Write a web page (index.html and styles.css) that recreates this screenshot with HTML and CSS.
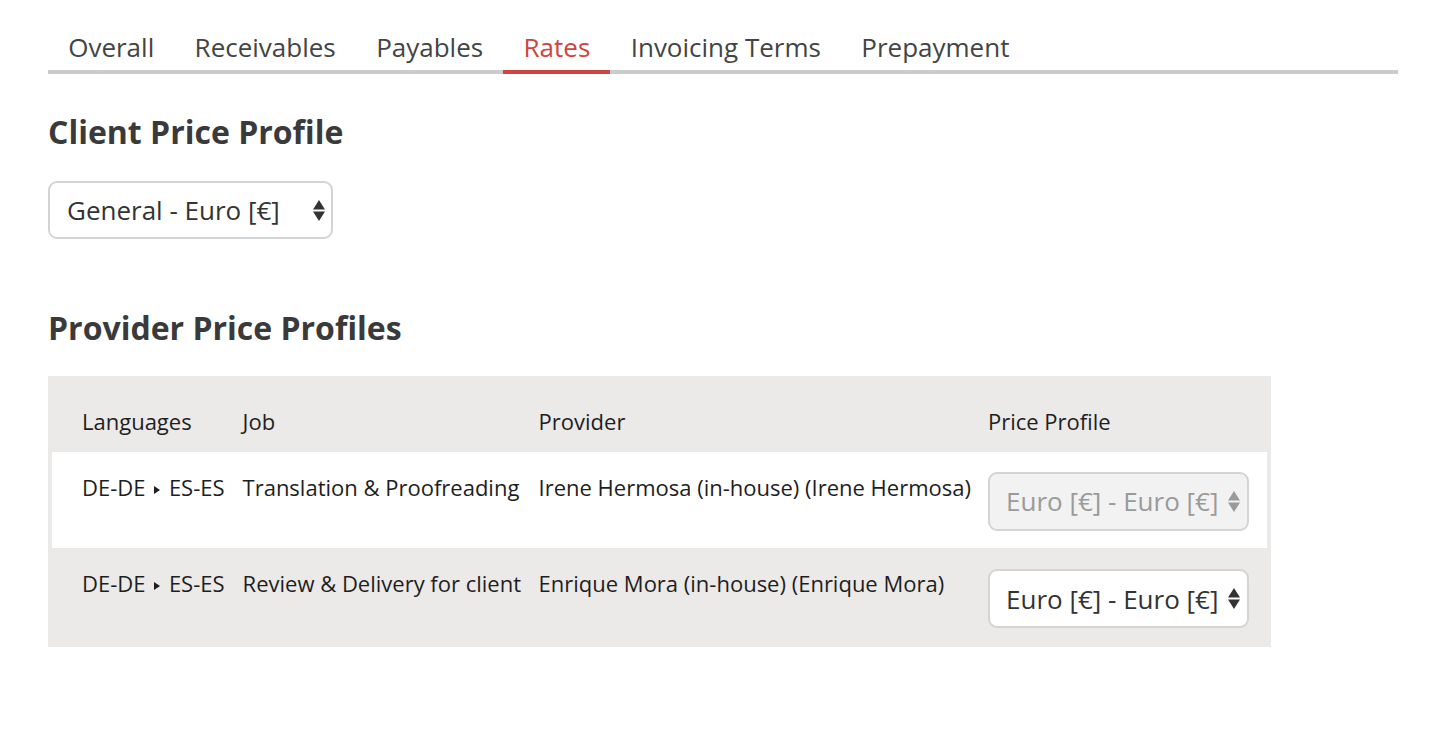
FILE: index.html
```html
<!DOCTYPE html>
<html lang="en">
<head>
<meta charset="utf-8">
<title>Rates</title>
<link rel="stylesheet" href="styles.css">
</head>
<body>
<div class="page">
  <nav class="tabs">
    <a class="tab">Overall</a>
    <a class="tab">Receivables</a>
    <a class="tab">Payables</a>
    <a class="tab active">Rates</a>
    <a class="tab">Invoicing Terms</a>
    <a class="tab">Prepayment</a>
  </nav>

  <h2 class="heading first">Client Price Profile</h2>
  <div class="select big">
    <span class="select-text">General - Euro [€]</span>
    <svg class="arrows" width="12" height="21" viewBox="0 0 12 21"><path d="M6 0 L12 9.5 L0 9.5 Z M0 11.5 L12 11.5 L6 21 Z" fill="currentColor"/></svg>
  </div>

  <h2 class="heading second">Provider Price Profiles</h2>
  <div class="table-wrap">
    <table class="profiles">
      <thead>
        <tr>
          <th>Languages</th>
          <th>Job</th>
          <th>Provider</th>
          <th>Price Profile</th>
        </tr>
      </thead>
      <tbody>
        <tr class="row-white">
          <td>DE-DE <span class="caret"></span> ES-ES</td>
          <td>Translation &amp; Proofreading</td>
          <td>Irene Hermosa (in-house) (Irene Hermosa)</td>
          <td>
            <div class="select small disabled">
              <span class="select-text">Euro [€] - Euro [€]</span>
              <svg class="arrows" width="12" height="21" viewBox="0 0 12 21"><path d="M6 0 L12 9.5 L0 9.5 Z M0 11.5 L12 11.5 L6 21 Z" fill="currentColor"/></svg>
            </div>
          </td>
        </tr>
        <tr class="row-gray">
          <td>DE-DE <span class="caret"></span> ES-ES</td>
          <td>Review &amp; Delivery for client</td>
          <td>Enrique Mora (in-house) (Enrique Mora)</td>
          <td>
            <div class="select small">
              <span class="select-text">Euro [€] - Euro [€]</span>
              <svg class="arrows" width="12" height="21" viewBox="0 0 12 21"><path d="M6 0 L12 9.5 L0 9.5 Z M0 11.5 L12 11.5 L6 21 Z" fill="currentColor"/></svg>
            </div>
          </td>
        </tr>
      </tbody>
    </table>
  </div>
</div>
</body>
</html>
```

FILE: styles.css
```css
* { box-sizing: border-box; }

body {
  margin: 0;
  background: #ffffff;
  font-family: "Open Sans", "Liberation Sans", sans-serif;
  color: #333333;
}

.page {
  padding: 26px 44px 0 48px;
}

.tabs {
  display: flex;
  border-bottom: 4px solid #cccccc;
}

.tab {
  font-size: 26px;
  line-height: 36px;
  padding: 3px 20.2px 5px;
  color: #444444;
  margin-bottom: -4px;
  border-bottom: 4px solid transparent;
  cursor: pointer;
}

.tab.active {
  color: #cc4540;
  border-bottom-color: #cc4540;
}

.heading {
  font-size: 32px;
  font-weight: 700;
  color: #3a3a3a;
  line-height: 44px;
  margin: 0;
}

.heading.first {
  margin-top: 36px;
}

.heading.second {
  margin-top: 67px;
}

.select {
  display: flex;
  align-items: center;
  justify-content: space-between;
  border: 2px solid #d4d4d4;
  border-radius: 9px;
  background: #ffffff;
  color: #333333;
  font-size: 26px;
}

.select.big {
  width: 285px;
  height: 58px;
  margin-top: 27px;
  padding: 0 6px 0 17px;
}

.select.small {
  width: 261px;
  height: 59px;
  padding: 0 7px 0 16px;
}

.select.disabled {
  background: #f2f2f2;
  color: #9a9a9a;
}

.arrows {
  display: block;
  flex: none;
}

.table-wrap {
  display: inline-block;
  margin-top: 26px;
  background: #ebeae8;
  padding: 0 4px;
}

.profiles {
  border-collapse: collapse;
  font-size: 22px;
  line-height: 30px;
  color: #1e1e1e;
}

.profiles th {
  font-weight: 400;
  text-align: left;
  height: 76px;
  padding: 14px 9px 0;
  white-space: nowrap;
  vertical-align: middle;
}

.profiles td {
  padding: 0 9px;
  white-space: nowrap;
  vertical-align: middle;
}

.profiles th:first-child,
.profiles td:first-child {
  padding-left: 30px;
}

.profiles th:nth-child(3),
.profiles td:nth-child(3) {
  padding-left: 8.5px;
  padding-right: 8px;
}

.profiles th:last-child,
.profiles td:last-child {
  padding-right: 18px;
}

.profiles td:not(:last-child) {
  vertical-align: top;
  padding-top: 20px;
}

.profiles td:last-child {
  padding-top: 2px;
}

.row-white {
  background: #ffffff;
  height: 96px;
}

.row-gray {
  height: 99px;
}

.caret {
  display: inline-block;
  width: 0;
  height: 0;
  border-left: 6px solid currentColor;
  border-top: 4.5px solid transparent;
  border-bottom: 4.5px solid transparent;
  margin: 0 3px;
  vertical-align: 2px;
}
```
